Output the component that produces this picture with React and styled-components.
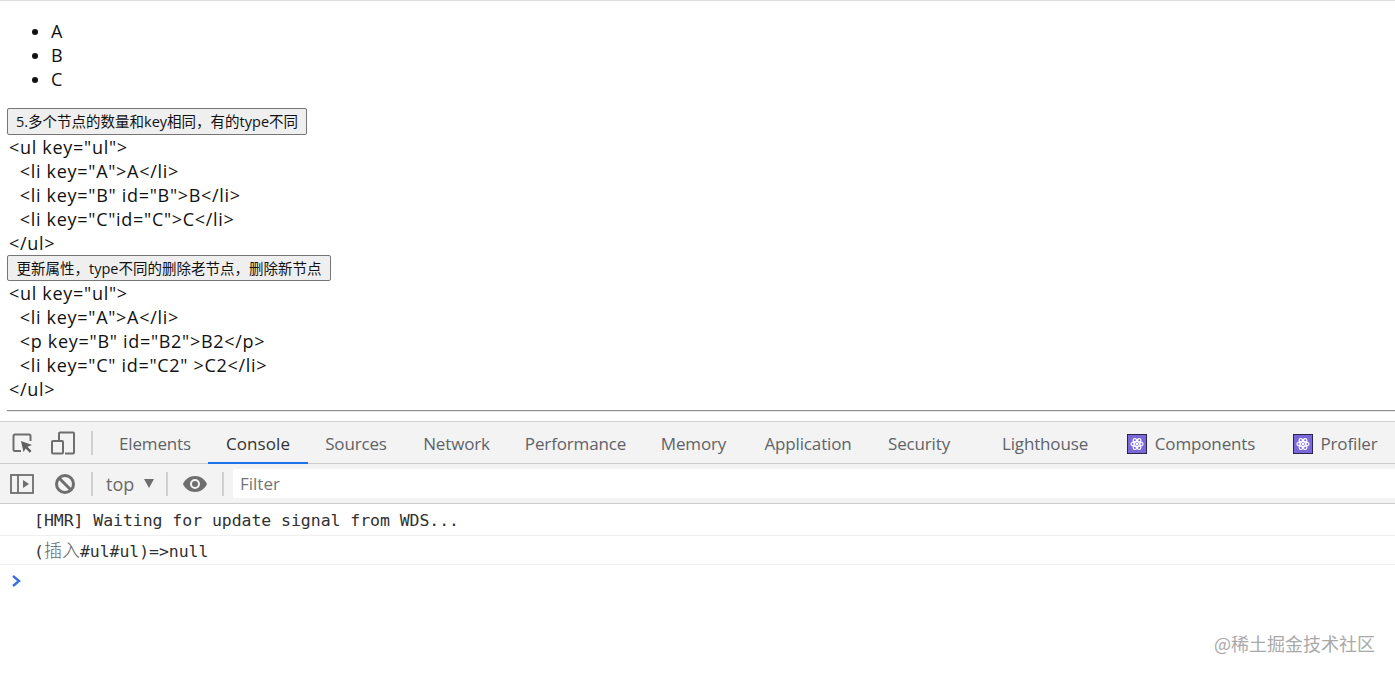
import React from "react";
import styled, { createGlobalStyle } from "styled-components";

const GlobalStyle = createGlobalStyle`
  html, body {
    margin: 0;
    padding: 0;
    background: #fff;
    overflow: hidden;
  }
  body {
    font-family: "Open Sans", "Noto Sans CJK SC", sans-serif;
    color: #111;
  }
`;

const Page = styled.div`
  width: 1395px;
  height: 675px;
  position: relative;
  overflow: hidden;
  border-top: 1px solid #dcdcdc;
  box-sizing: border-box;
`;

const Preview = styled.div`
  height: 420px;
  padding: 18px 0 0 7px;
  box-sizing: border-box;
  font-size: 18px;
  line-height: 24px;
`;

const List = styled.ul`
  margin: 0 0 17px;
  padding: 0 0 0 44px;
  li {
    height: 24px;
  }
`;

const ActionButton = styled.button`
  display: block;
  height: ${(p) => p.$h}px;
  width: ${(p) => p.$w}px;
  padding: 0 0 2px;
  border: 1px solid #767676;
  border-radius: 2px;
  background: #efefef;
  color: #111;
  font: 14.5px "Open Sans", "Noto Sans CJK SC", sans-serif;
  white-space: nowrap;
`;

const Code = styled.pre`
  margin: 0;
  padding-left: 2px;
  height: ${(p) => p.$lines * 24}px;
  font: 18px/24px "Open Sans", sans-serif;
  letter-spacing: 0.7px;
`;

const Rule = styled.hr`
  margin: 9px 0 0;
  border: 0;
  border-top: 1px solid #8d8d8d;
  border-bottom: 1px solid #e8e8e8;
`;

const Devtools = styled.div`
  font-family: "Open Sans", "Noto Sans CJK SC", sans-serif;
  color: #5a5a5a;
`;

const TabBar = styled.div`
  height: 43px;
  box-sizing: border-box;
  display: flex;
  align-items: center;
  background: #f3f3f3;
  border-top: 1px solid #cfcfcf;
  border-bottom: 1px solid #cccccc;
  position: relative;
`;

const IconSlot = styled.span`
  width: ${(p) => p.$w}px;
  display: flex;
  justify-content: center;
  align-items: center;
  flex: none;
`;

const Divider = styled.span`
  width: 2px;
  height: 24px;
  background: #d0d0d0;
  flex: none;
  margin: ${(p) => p.$margin || "0"};
`;

const Tab = styled.div`
  position: absolute;
  top: 0;
  bottom: -1px;
  left: ${(p) => p.$left}px;
  width: ${(p) => p.$width}px;
  padding-top: 3px;
  box-sizing: border-box;
  display: flex;
  align-items: center;
  justify-content: center;
  gap: 8px;
  font-size: 17px;
  letter-spacing: ${(p) => (p.$active ? "0.1px" : "-0.15px")};
  color: ${(p) => (p.$active ? "#333" : "#5f6368")};
  border-bottom: ${(p) => (p.$active ? "2px solid #1a73e8" : "2px solid transparent")};
  white-space: nowrap;
`;

const ReactBadge = styled.span`
  width: 20px;
  height: 20px;
  box-sizing: border-box;
  background: #7b68d8;
  border: 1px solid #2b2450;
  display: flex;
  align-items: center;
  justify-content: center;
`;

const Toolbar = styled.div`
  height: 40px;
  box-sizing: border-box;
  display: flex;
  align-items: center;
  background: #f3f3f3;
  border-bottom: 1px solid #cccccc;
`;

const Context = styled.span`
  font-size: 18px;
  color: #6a6a6a;
  display: flex;
  align-items: center;
  gap: 10px;
  margin-left: 13px;
  width: 60px;
  flex: none;
`;

const Caret = styled.span`
  width: 0;
  height: 0;
  border-left: 5px solid transparent;
  border-right: 5px solid transparent;
  border-top: 9px solid #6e6e6e;
`;

const FilterBox = styled.div`
  flex: 1;
  height: 29px;
  margin-left: 9px;
  background: #fff;
  border-radius: 2px 0 0 2px;
  padding-left: 7px;
  font-size: 17px;
  line-height: 30px;
  color: #757575;
`;

const LogRow = styled.div`
  height: ${(p) => p.$h}px;
  box-sizing: border-box;
  padding: ${(p) => p.$top}px 0 0 34px;
  border-bottom: 1px solid #f0f0f0;
  font: 16.5px/${(p) => p.$h - 1 - p.$top}px "DejaVu Sans Mono", "Noto Sans CJK SC", monospace;
  letter-spacing: -0.05px;
  color: #303030;
  white-space: pre;
`;

const CjkRun = styled.span`
  font-size: 18px;
  letter-spacing: 0;
  font-weight: 300;
  color: #666;
`;

const Prompt = styled.div`
  height: 30px;
  padding: 6px 0 0 11px;
  box-sizing: border-box;
`;

const Watermark = styled.div`
  position: absolute;
  right: 20px;
  top: 630px;
  font-size: 18px;
  line-height: 24px;
  color: #a9a9a9;
  font-family: "Noto Sans CJK SC", sans-serif;
`;

const tabs = [
  ["Elements", 102, 106],
  ["Console", 208, 100, true],
  ["Sources", 308, 96],
  ["Network", 404, 105],
  ["Performance", 509, 133],
  ["Memory", 642, 103],
  ["Application", 745, 126],
  ["Security", 871, 96],
  ["Lighthouse", 983, 124],
];

const ReactIcon = () => (
  <ReactBadge>
    <svg width="14" height="14" viewBox="0 0 14 14" fill="none" stroke="#fff" strokeWidth="1.2">
      <ellipse cx="7" cy="7" rx="6" ry="2.4" />
      <ellipse cx="7" cy="7" rx="6" ry="2.4" transform="rotate(60 7 7)" />
      <ellipse cx="7" cy="7" rx="6" ry="2.4" transform="rotate(120 7 7)" />
      <circle cx="7" cy="7" r="1.3" fill="#fff" stroke="none" />
    </svg>
  </ReactBadge>
);

const App = () => {
  return (
    <Page>
      <GlobalStyle />
      <Preview>
        <List>
          <li>A</li>
          <li>B</li>
          <li>C</li>
        </List>
        <ActionButton $h={27} $w={300}>5.多个节点的数量和key相同，有的type不同</ActionButton>
        <Code $lines={5}>{`<ul key="ul">
  <li key="A">A</li>
  <li key="B" id="B">B</li>
  <li key="C"id="C">C</li>
</ul>`}</Code>
        <ActionButton $h={26} $w={324}>更新属性，type不同的删除老节点，删除新节点</ActionButton>
        <Code $lines={5}>{`<ul key="ul">
  <li key="A">A</li>
  <p key="B" id="B2">B2</p>
  <li key="C" id="C2" >C2</li>
</ul>`}</Code>
        <Rule />
      </Preview>
      <Devtools>
        <TabBar>
          <IconSlot $w={46}>
            <svg width="24" height="24" viewBox="0 0 24 24" fill="none">
              <path d="M10 20H4a1.5 1.5 0 0 1-1.500-1.500V5A1.500 1.500 0 0 1 4 3.500h14A1.500 1.500 0 0 1 19.500 5v5" stroke="#6e6e6e" strokeWidth="2" />
              <path d="M10 10l11 4-4.500 1.800 4 4.200-1.800 1.800-4-4.200L12.500 21z" fill="#5f5f5f" />
            </svg>
          </IconSlot>
          <IconSlot $w={34}>
            <svg width="26" height="26" viewBox="0 0 26 26" fill="none" stroke="#6e6e6e" strokeWidth="2">
              <path d="M9 11V3.500a1 1 0 0 1 1-1h13a1 1 0 0 1 1 1v19a1 1 0 0 1-1 1h-8" />
              <rect x="2" y="11" width="11" height="12.500" rx="1" />
            </svg>
          </IconSlot>
          <Divider $margin="0 0 0 11px" />
          {tabs.map(([label, left, width, active]) => (
            <Tab key={label} $left={left} $width={width} $active={active}>
              {label}
            </Tab>
          ))}
          <Tab $left={1107} $width={168}>
            <ReactIcon />
            Components
          </Tab>
          <Tab $left={1275} $width={120}>
            <ReactIcon />
            Profiler
          </Tab>
        </TabBar>
        <Toolbar>
          <IconSlot $w={43}>
            <svg width="24" height="20" viewBox="0 0 24 20" fill="none">
              <rect x="1" y="1" width="22" height="18" stroke="#6e6e6e" strokeWidth="1.800" />
              <path d="M8 1v18" stroke="#6e6e6e" strokeWidth="1.800" />
              <path d="M13 6l6 4-6 4z" fill="#6e6e6e" />
            </svg>
          </IconSlot>
          <IconSlot $w={44}>
            <svg width="22" height="22" viewBox="0 0 22 22" fill="none" stroke="#6e6e6e" strokeWidth="3">
              <circle cx="11" cy="11" r="8.500" />
              <path d="M5 5l12 12" />
            </svg>
          </IconSlot>
          <Divider $margin="0 0 0 4px" />
          <Context>
            top
            <Caret />
          </Context>
          <Divider $margin="0" />
          <IconSlot $w={54}>
            <svg width="26" height="18" viewBox="0 0 26 18">
              <path fillRule="evenodd" d="M13 1C7.500 1 3 4.500 1 9c2 4.500 6.500 8 12 8s10-3.500 12-8c-2-4.500-6.500-8-12-8zm0 13a5 5 0 1 1 0-10 5 5 0 0 1 0 10zm0-8a3 3 0 1 0 0 6 3 3 0 0 0 0-6z" fill="#6e6e6e" />
            </svg>
          </IconSlot>
          <Divider $margin="0" />
          <FilterBox>Filter</FilterBox>
        </Toolbar>
        <LogRow $h={32} $top={2}>[HMR] Waiting for update signal from WDS...</LogRow>
        <LogRow $h={29} $top={2}>(<CjkRun>插入</CjkRun>#ul#ul)=&gt;null</LogRow>
        <Prompt>
          <svg width="12" height="14" viewBox="0 0 12 14" fill="none" stroke="#3b6fe0" strokeWidth="2.400">
            <path d="M2 2l6 5-6 5" />
          </svg>
        </Prompt>
      </Devtools>
      <Watermark>@稀土掘金技术社区</Watermark>
    </Page>
  );
};

export default App;
